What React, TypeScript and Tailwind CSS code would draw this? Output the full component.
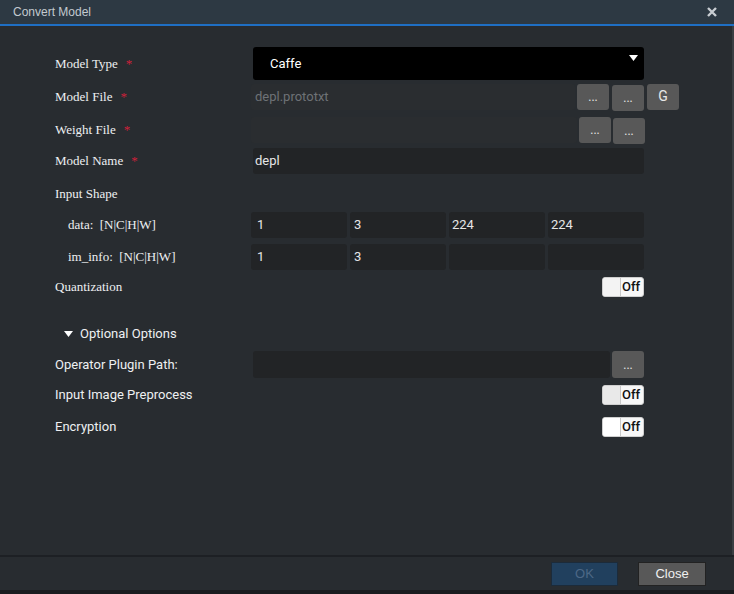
const serif = "font-['Liberation_Serif',serif]";
const sans = "font-['Roboto','Liberation_Sans',sans-serif]";

const Req = () => <span className="ml-[8px] text-[#d0203a]">*</span>;

const DotBtn = ({ label = "...", cls = "" }: { label?: string; cls?: string }) => (
  <button className={`h-[26px] w-[32px] shrink-0 rounded-[3px] bg-[#585858] text-[12px] text-[#e8e8e8] ${sans} ${cls}`}>{label}</button>
);

const Toggle = ({ knob = "bg-white" }: { knob?: string }) => (
  <div className="flex h-[20px] w-[42px] overflow-hidden rounded-[3px] border border-[#cfcfcf] bg-[#f7f7f7]">
    <div className={`w-[18px] border-r border-[#c8c8c8] ${knob}`} />
    <div className={`flex-1 pl-[1px] text-[13px] font-medium leading-[18px] text-[#111] ${sans}`}>Off</div>
  </div>
);

const Box = ({ value = "", cls = "" }: { value?: string; cls?: string }) => (
  <div className={`flex h-[26px] shrink-0 items-center rounded-[3px] bg-[#222426] px-[6px] text-[13px] text-[#e6e6e6] ${sans} ${cls}`}>{value}</div>
);

const App = () => {
  return (
    <div className="flex h-[594px] w-[734px] flex-col overflow-hidden bg-[#282c30]">
      <div className="flex h-[26px] shrink-0 items-center justify-between border-b-2 border-[#1f6fc4] bg-[#2d3943] pl-[13px] pr-[17px]">
        <span className="font-['Liberation_Sans',sans-serif] text-[12px] text-[#c3c9cf]">Convert Model</span>
        <svg width="10" height="10" viewBox="0 0 10 10">
          <path d="M1 1L9 9M9 1L1 9" stroke="#c8cdd2" strokeWidth="2.4" />
        </svg>
      </div>

      <div className="flex flex-1 border-r-2 border-[#3a3e42]">
        <div className="flex w-[644px] flex-col pl-[55px] text-[13px] text-[#eef0f2]">
          <div className="mt-[21px] flex h-[33px] items-center">
            <div className={`w-[198px] shrink-0 ${serif}`}>Model Type<Req /></div>
            <div className={`relative flex h-[33px] w-[391px] items-center rounded-[3px] bg-black pl-[17px] text-[13px] text-white ${sans}`}>
              Caffe
              <svg className="absolute right-[6px] top-[8px]" width="9" height="6" viewBox="0 0 9 6">
                <path d="M0 0H9L4.5 6Z" fill="#ffffff" />
              </svg>
            </div>
          </div>

          <div className="mt-[4px] flex h-[26px] items-center">
            <div className={`w-[196px] shrink-0 ${serif}`}>Model File<Req /></div>
            <div className={`flex h-[26px] w-[324px] shrink-0 items-center rounded-[3px] bg-[#2a2d30] pl-[4px] text-[13px] text-[#6e7276] ${sans}`}>depl.prototxt</div>
            <div className="ml-[2px] flex shrink-0 gap-[3px]">
              <DotBtn />
              <DotBtn cls="mt-[1px]" />
              <DotBtn label="G" cls="text-[14px]" />
            </div>
          </div>

          <div className="mt-[7px] flex h-[26px] items-center">
            <div className={`w-[196px] shrink-0 ${serif}`}>Weight File<Req /></div>
            <div className="h-[26px] w-[326px] shrink-0 rounded-[3px] bg-[#2a2d30]" />
            <div className="ml-[2px] flex shrink-0 gap-[2px]">
              <DotBtn />
              <DotBtn cls="mt-[1px]" />
            </div>
          </div>

          <div className="mt-[5px] flex h-[26px] items-center">
            <div className={`w-[198px] shrink-0 ${serif}`}>Model Name<Req /></div>
            <Box value="depl" cls="w-[391px] pl-[2px]" />
          </div>

          <div className="mt-[7px] flex h-[26px] items-center">
            <div className={serif}>Input Shape</div>
          </div>

          <div className="mt-[5px] flex h-[26px] items-center">
            <div className={`w-[196px] shrink-0 pl-[13px] ${serif}`}>data:&nbsp; [N|C|H|W]</div>
            <div className="flex gap-[3px]">
              <Box value="1" cls="w-[96px]" />
              <Box value="3" cls="w-[96px] pl-[4px]" />
              <Box value="224" cls="w-[96px] pl-[3px]" />
              <Box value="224" cls="w-[96px] pl-[3px]" />
            </div>
          </div>

          <div className="mt-[6px] flex h-[26px] items-center">
            <div className={`w-[196px] shrink-0 pl-[13px] ${serif}`}>im_info:&nbsp; [N|C|H|W]</div>
            <div className="flex gap-[3px]">
              <Box value="1" cls="w-[96px]" />
              <Box value="3" cls="w-[96px] pl-[4px]" />
              <Box cls="w-[96px]" />
              <Box cls="w-[96px]" />
            </div>
          </div>

          <div className="mt-[4px] flex h-[26px] items-center justify-between">
            <div className={serif}>Quantization</div>
            <Toggle knob="bg-[#f3f3f3]" />
          </div>

          <div className={`mt-[21px] flex h-[26px] items-center pl-[9px] ${sans}`}>
            <svg width="9" height="6" viewBox="0 0 9 6">
              <path d="M0 0H9L4.5 6Z" fill="#ffffff" />
            </svg>
            <span className="ml-[7px]">Optional Options</span>
          </div>

          <div className="mt-[4px] flex h-[27px] items-center">
            <div className={`w-[198px] shrink-0 ${sans}`}>Operator Plugin Path:</div>
            <div className="h-[27px] w-[357px] shrink-0 rounded-[3px] bg-[#222426]" />
            <DotBtn cls="ml-[2px] h-[27px]" />
          </div>

          <div className="mt-[4px] flex h-[26px] items-center justify-between">
            <div className={sans}>Input Image Preprocess</div>
            <Toggle knob="bg-[#e9e9e9]" />
          </div>

          <div className="mt-[6px] flex h-[26px] items-center justify-between">
            <div className={sans}>Encryption</div>
            <Toggle />
          </div>
        </div>
      </div>

      <div className="flex h-[35px] shrink-0 items-center justify-end gap-[20px] border-t-2 border-[#1d2024] pr-[28px]">
        <button className="h-[24px] w-[67px] border border-[#1c2b3a] bg-[#21405e] font-['Liberation_Sans',sans-serif] text-[13px] text-[#4d6886]">OK</button>
        <button className="h-[24px] w-[68px] border border-[#222] bg-[#585858] font-['Liberation_Sans',sans-serif] text-[13px] text-[#f0f0f0]">Close</button>
      </div>
      <div className="h-[4px] shrink-0 bg-[#1a1c1f]" />
    </div>
  );
};

export default App;
